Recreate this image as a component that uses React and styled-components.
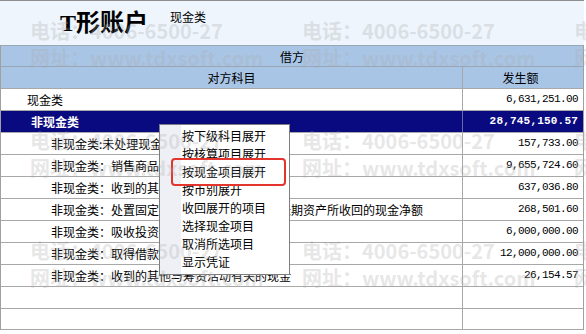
import React from 'react'
import styled, { createGlobalStyle } from 'styled-components'

const GlobalStyle = createGlobalStyle`
  html, body {
    margin: 0;
    padding: 0;
    background: #fff;
  }
  body {
    font-family: "Noto Sans CJK SC", "Liberation Sans", sans-serif;
    font-size: 12px;
    color: #000;
    overflow: hidden;
  }
`

const Page = styled.div`
  position: relative;
  width: 586px;
  height: 334px;
  overflow: hidden;
  background: #fff;
`

const TitleBar = styled.div`
  height: 45px;
  border-top: 1px solid #8e8e8e;
  background: #eef5fc;
  display: flex;
  align-items: flex-start;
  padding-left: 60px;
  width: 584px;
  box-sizing: border-box;
`

const Title = styled.h1`
  margin: 7px 0 0;
  font-family: "Liberation Serif", "Noto Sans CJK SC", serif;
  font-weight: 700;
  font-size: 24px;
  line-height: 30px;
  letter-spacing: 0;
`

const Subtitle = styled.span`
  margin: 8px 0 0 22px;
  font-size: 12px;
  line-height: 16px;
`

const Grid = styled.div`
  width: 584px;
  border-left: 1px solid #a0a0a0;
  border-right: 1px solid #a0a0a0;
  box-sizing: border-box;
`

const Band = styled.div`
  height: 21px;
  box-sizing: border-box;
  border-top: 1px solid #9aa6b4;
  background: #a9c5e6;
  display: flex;
  align-items: center;
  justify-content: center;
  font-size: 12px;
`

const Row = styled.div`
  display: grid;
  grid-template-columns: 462px 1fr;
  height: 22px;
  box-sizing: border-box;
  border-top: 1px solid ${p => (p.$head ? '#9aa6b4' : '#a8a8a8')};
  border-bottom: ${p => (p.$last ? '1px solid #a8a8a8' : 'none')};
  background: ${p => (p.$head ? '#a9c5e6' : p.$selected ? '#0a0a80' : '#fff')};
  color: ${p => (p.$selected ? '#fff' : '#000')};
  font-weight: ${p => (p.$selected ? 700 : 400)};
`

const NameCell = styled.div`
  display: flex;
  align-items: center;
  justify-content: ${p => (p.$center ? 'center' : 'flex-start')};
  padding-left: ${p => p.$indent || 0}px;
  border-right: 1px solid ${p => (p.$selected ? '#6a6aa8' : '#a8a8a8')};
  white-space: nowrap;
  overflow: hidden;
  line-height: 21px;
`

const AmountCell = styled.div`
  display: flex;
  align-items: center;
  justify-content: ${p => (p.$center ? 'center' : 'flex-end')};
  padding-right: 5px;
  font-family: ${p => (p.$center ? '"Noto Sans CJK SC", sans-serif' : '"Liberation Mono", monospace')};
  font-size: ${p => (p.$center ? 12 : 11)}px;
  letter-spacing: ${p => (p.$center ? 0 : p.$selected ? 0.2 : -0.6)}px;
  line-height: 21px;
`

const Menu = styled.ul`
  position: absolute;
  left: 159px;
  top: 124px;
  width: 131px;
  margin: 0;
  padding: 2px 0 3px;
  list-style: none;
  box-sizing: border-box;
  border: 1px solid #7e7e7e;
  background: linear-gradient(to right, #eff0f6 0, #eff0f6 21px, #fff 21px);
`

const MenuItem = styled.li`
  height: 18px;
  line-height: 18px;
  padding-left: 22px;
  font-size: 12px;
  white-space: nowrap;
`

const Highlight = styled.div`
  position: absolute;
  left: 171px;
  top: 158px;
  width: 115px;
  height: 28px;
  box-sizing: border-box;
  border: 2px solid #e4342e;
  border-radius: 4px;
  pointer-events: none;
`

const Watermark = styled.div`
  position: absolute;
  inset: 0;
  pointer-events: none;
  display: grid;
  grid-template-columns: repeat(3, 272px);
  grid-template-rows: repeat(3, 110px);
  padding: 17px 0 0 30px;
`

const Stamp = styled.div`
  font-family: "Noto Sans CJK SC", "DejaVu Sans", sans-serif;
  font-weight: 700;
  font-size: 20px;
  line-height: 27px;
  color: rgba(170, 170, 170, 0.3);
  white-space: nowrap;
`

const rows = [
  { name: '现金类', amount: '6,631,251.00', indent: 26 },
  { name: '非现金类', amount: '28,745,150.57', indent: 30, selected: true },
  { name: '非现金类:未处理现金项目', amount: '157,733.00', indent: 50 },
  { name: '非现金类：销售商品、提供劳务收到的现金', amount: '9,655,724.60', indent: 50 },
  { name: '非现金类：收到的其他经营活动现金', amount: '637,036.80', indent: 50 },
  { name: '非现金类：处置固定资产、无形资产和其他长期资产所收回的现金净额', amount: '268,501.60', indent: 50 },
  { name: '非现金类：吸收投资所收到的现金', amount: '6,000,000.00', indent: 50 },
  { name: '非现金类：取得借款所收到的现金', amount: '12,000,000.00', indent: 50 },
  { name: '非现金类：收到的其他与筹资活动有关的现金', amount: '26,154.57', indent: 50 },
  { name: '', amount: '' },
  { name: '', amount: '' },
]

const menuItems = [
  '按下级科目展开',
  '按核算项目展开',
  '按现金项目展开',
  '按币别展开',
  '收回展开的项目',
  '选择现金项目',
  '取消所选项目',
  '显示凭证',
]

export default function App() {
  return (
    <Page>
      <GlobalStyle />
      <TitleBar>
        <Title>T形账户</Title>
        <Subtitle>现金类</Subtitle>
      </TitleBar>
      <Grid>
        <Band>借方</Band>
        <Row $head>
          <NameCell $center>对方科目</NameCell>
          <AmountCell $center>发生额</AmountCell>
        </Row>
        {rows.map((r, i) => (
          <Row key={i} $selected={r.selected} $last={i === rows.length - 1}>
            <NameCell $indent={r.indent} $selected={r.selected}>{r.name}</NameCell>
            <AmountCell $selected={r.selected}>{r.amount}</AmountCell>
          </Row>
        ))}
      </Grid>
      <Menu>
        {menuItems.map(m => <MenuItem key={m}>{m}</MenuItem>)}
      </Menu>
      <Highlight />
      <Watermark>
        {Array.from({ length: 9 }).map((_, i) => (
          <Stamp key={i}>
            <div>电话：4006-6500-27</div>
            <div>网址：www.tdxsoft.com</div>
          </Stamp>
        ))}
      </Watermark>
    </Page>
  )
}
